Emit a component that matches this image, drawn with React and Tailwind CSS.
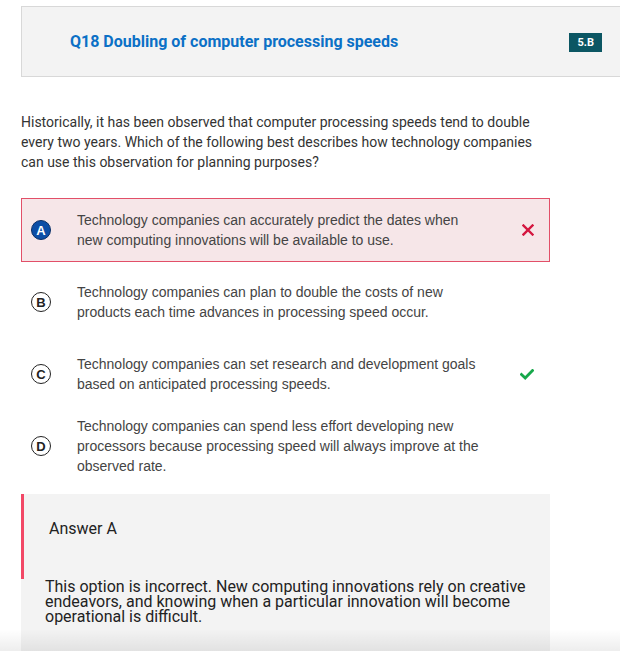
import React from "react";

const options = [
  {
    letter: "A",
    text: "Technology companies can accurately predict the dates when new computing innovations will be available to use.",
    selected: true,
    mark: "wrong",
  },
  {
    letter: "B",
    text: "Technology companies can plan to double the costs of new products each time advances in processing speed occur.",
  },
  {
    letter: "C",
    text: "Technology companies can set research and development goals based on anticipated processing speeds.",
    mark: "right",
  },
  {
    letter: "D",
    text: "Technology companies can spend less effort developing new processors because processing speed will always improve at the observed rate.",
  },
];

const CrossIcon = () => (
  <svg width="12" height="12" viewBox="0 0 12 12">
    <path d="M1.5 1.5 L10.5 10.5 M10.5 1.5 L1.5 10.5" stroke="#d4163f" strokeWidth="2.4" strokeLinecap="square" />
  </svg>
);

const CheckIcon = () => (
  <svg width="14" height="11" viewBox="0 0 14 11">
    <path d="M1.5 5.5 L5.2 9 L12.5 1.5" stroke="#17a84b" strokeWidth="2.8" fill="none" strokeLinecap="square" />
  </svg>
);

const Option = ({ letter, text, selected, mark }) => (
  <div
    className={`flex items-center min-h-[64px] mb-2 border ${
      selected ? "bg-[#f6e6e8] border-[#e24f68]" : "bg-white border-transparent"
    }`}
  >
    <div className="w-[55px] shrink-0 pl-[9px]">
      <div
        className={`w-[20px] h-[20px] rounded-full flex items-center justify-center text-[13px] leading-none font-bold font-['Liberation_Sans',Arial,sans-serif] ${
          selected
            ? "bg-[#0c4ea6] border-[1.5px] border-[#0a2f66] text-white"
            : "bg-white border-[1.5px] border-[#222] text-[#222]"
        }`}
      >
        {letter}
      </div>
    </div>
    <div className="w-[410px] text-[14px] leading-[20px] text-[#444] font-['Liberation_Sans',Arial,sans-serif]">
      {text}
    </div>
    <div className="flex-1 flex justify-end pr-[15px]">
      {mark === "wrong" && <CrossIcon />}
      {mark === "right" && <CheckIcon />}
    </div>
  </div>
);

export default function App() {
  return (
    <div className="relative w-[620px] h-[651px] overflow-hidden bg-white font-['Roboto',sans-serif]">
      <div className="pt-[6px] pl-[21px]">
        <div className="flex items-center h-[71px] bg-[#f3f3f3] border border-[#d8d8d8] -mr-4 pl-[48px] pr-[33px]">
          <h1 className="flex-1 text-[16px] font-bold text-[#0b70c6]">
            Q18 Doubling of computer processing speeds
          </h1>
          <span className="bg-[#0b5663] text-white text-[11px] font-bold px-[8px] py-[2px] leading-[15px] mt-[1px]">
            5.B
          </span>
        </div>
      </div>

      <div className="pl-[21px] w-[550px]">
        <p className="mt-[35px] text-[14px] leading-[20px] text-[#333] pr-[10px]">
          Historically, it has been observed that computer processing speeds tend to double every two years. Which of
          the following best describes how technology companies can use this observation for planning purposes?
        </p>

        <div className="mt-[26px]">
          {options.map((o) => (
            <Option key={o.letter} {...o} />
          ))}
        </div>

        <div className="mt-[16px] bg-[#f3f3f3] h-[200px]">
          <div className="border-l-[3px] border-[#f24866] h-[85px] pl-[25px] pt-[23px]">
            <div className="text-[16px] leading-[24px] text-[#222]">Answer A</div>
          </div>
          <p className="pl-[24px] pr-[20px] text-[16px] leading-[15px] text-[#222]">
            This option is incorrect. New computing innovations rely on creative endeavors, and knowing when a
            particular innovation will become operational is difficult.
          </p>
        </div>
      </div>

      <div className="absolute bottom-0 left-0 right-0 h-[22px] bg-gradient-to-b from-transparent to-black/[0.07]" />
    </div>
  );
}
